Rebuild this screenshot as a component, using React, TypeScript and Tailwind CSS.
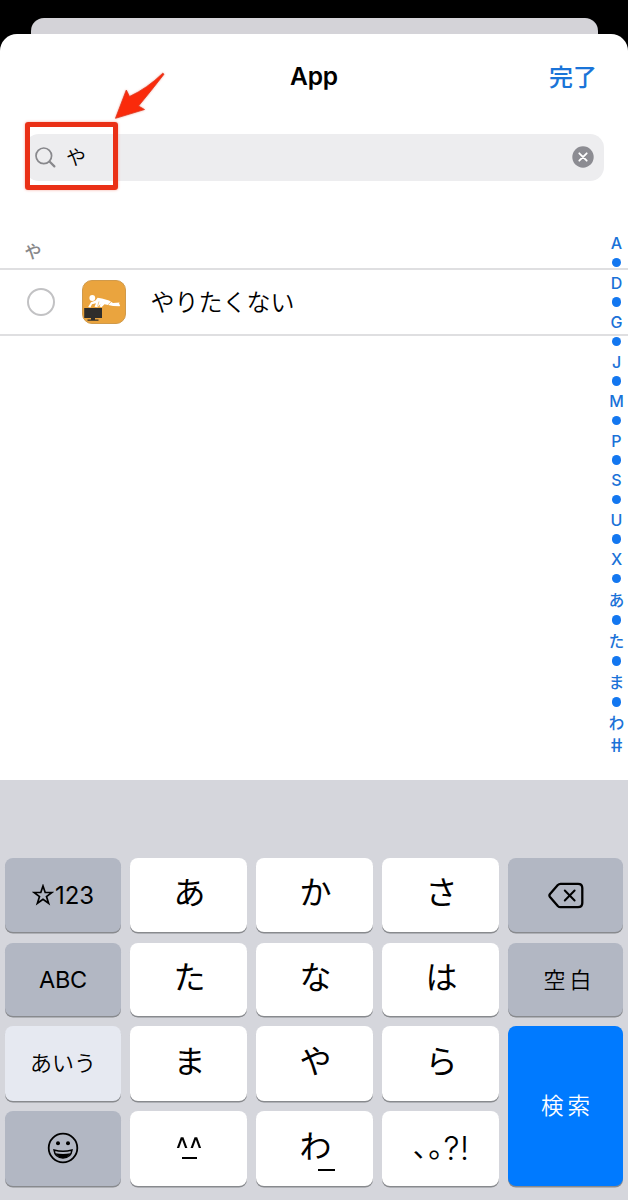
import type { ReactNode } from "react";

const JP = "font-['Inter','Noto_Sans_CJK_JP',sans-serif]";

const latinIndex = ["A", "D", "G", "J", "M", "P", "S", "U", "X"];
const kanaIndex = ["あ", "た", "ま", "わ"];

function Dot({ className }: { className: string }) {
  return (
    <span className={`flex items-center justify-center ${className}`}>
      <span className="size-[9.5px] rounded-full bg-[#1377f0]" />
    </span>
  );
}

function SectionIndex() {
  return (
    <nav className="absolute top-[233px] right-0 flex w-[23px] flex-col text-center text-[16px] font-medium text-[#1a72d8]">
      {latinIndex.map((c) => (
        <div key={c}>
          <span className="block h-[19.5px] leading-[20px]">{c}</span>
          <Dot className="h-[20px]" />
        </div>
      ))}
      {kanaIndex.map((c, i) => (
        <div key={c}>
          <span className="block h-[21.5px] text-[15.5px] leading-[23px]">{c}</span>
          {i < kanaIndex.length - 1 && <Dot className="h-[19.5px]" />}
        </div>
      ))}
      <span className="block h-[22px] skew-x-[8deg] text-[19px] leading-[25px]">#</span>
    </nav>
  );
}

function AppIcon() {
  return (
    <svg className="size-[44px] shrink-0" viewBox="0 0 44 44">
      <rect x="0.5" y="0.5" width="43" height="43" rx="9.5" fill="#eaa43e" stroke="#d09a4b" />
      <g fill="#fff">
        <circle cx="10.3" cy="18" r="2.9" />
        <path d="M6.200 27 L9 22.200 L13.500 20.600 L15.600 17.800 L20 18.600 L27 20.400 L31 23 L37.600 22.400 L37 23.900 L38.200 25 L37.600 26.200 L31 26 L22.500 24.300 L19.500 27.200 L17.500 26.600 L18.500 24 L15.500 27.200 L12.500 26.800 L14 23.300 L10 24.300 L8.400 27.500 Z" />
      </g>
      <path d="M15.500 26.500 L17 21.500 M26 24.800 L29 22" stroke="#eaa43e" strokeWidth="0.600" />
      <path d="M2.200 28 H20 V38 H13 V39.600 H16.500 V40.800 H5.500 V39.600 H9 V38 H2.200 Z" fill="#2e2d2b" />
    </svg>
  );
}

function Key({ tone = "light", className = "", children }: { tone?: "light" | "dark" | "pale" | "blue"; className?: string; children: ReactNode }) {
  const tones = {
    light: "bg-white text-black text-[32px] pl-[2px] pb-[4px]",
    dark: "bg-[#b2b7c3] text-black text-[24px]",
    pale: "bg-[#e6e9f1] text-black text-[22px]",
    blue: "bg-[#007aff] text-white text-[23px]",
  };
  return (
    <button
      className={`relative flex items-center justify-center rounded-[8px] leading-none shadow-[0_1.5px_0_#888a8e] ${tones[tone]} ${className}`}
    >
      {children}
    </button>
  );
}

function Keyboard() {
  return (
    <section className="h-[420px] bg-[#d5d6dc] px-[5px] pt-[78px]">
      <div className="grid grid-cols-[116px_117px_117px_117px_115px] grid-rows-[75px_73px_75px_75px] gap-x-[9px] gap-y-[10px] font-normal">
        <Key tone="dark" className="h-[74px]">
          <svg className="mr-px size-[22px]" viewBox="0 0 22 22" fill="none" stroke="#000" strokeWidth="1.7" strokeLinejoin="miter">
            <path d="M11 2 L13.200 8.500 H20 L14.500 12.600 L16.600 19.300 L11 15.200 L5.400 19.300 L7.500 12.600 L2 8.500 H8.800 Z" />
          </svg>
          <span className="pt-0.5">123</span>
        </Key>
        <Key className="h-[74px]">あ</Key>
        <Key className="h-[74px]">か</Key>
        <Key className="h-[74px]">さ</Key>
        <Key tone="dark" className="h-[74px]">
          <svg className="h-[27px] w-[36px]" viewBox="0 0 36 27" fill="none" stroke="#000" strokeWidth="2.300" strokeLinejoin="round" strokeLinecap="round">
            <path d="M12.500 1.800 H30 Q34.300 1.800 34.300 6 V21 Q34.300 25.200 30 25.200 H12.500 Q11 25.200 9.800 24 L2 15 Q0.800 13.500 2 12 L9.800 3 Q11 1.800 12.500 1.800 Z" />
            <path d="M16.800 8.500 L26.600 18.500 M26.600 8.500 L16.800 18.500" strokeWidth="2" />
          </svg>
        </Key>

        <Key tone="dark"><span className="text-[23.500px] tracking-[-0.3px]">ABC</span></Key>
        <Key>た</Key>
        <Key>な</Key>
        <Key>は</Key>
        <Key tone="dark"><span className="pl-2 text-[22px] font-[350] tracking-[4px]">空白</span></Key>

        <Key tone="pale"><span className="pb-0.5 font-[350]">あいう</span></Key>
        <Key>ま</Key>
        <Key>や</Key>
        <Key>ら</Key>
        <Key tone="blue" className="row-span-2">
          <span className="pl-1 text-[22.500px] font-[350] tracking-[4px]">検索</span>
        </Key>

        <Key tone="dark" className="pb-[2px]">
          <svg className="size-[32px]" viewBox="0 0 32 32" fill="none" stroke="#000" strokeWidth="1.800">
            <circle cx="16" cy="16" r="14.300" />
            <circle cx="11" cy="11.300" r="2" fill="#000" stroke="none" />
            <circle cx="21" cy="11.300" r="2" fill="#000" stroke="none" />
            <path d="M7 18 Q16 20.500 25 18 Q24 26 16 26 Q8 26 7 18 Z" strokeWidth="1.500" />
            <path d="M8.500 21.200 Q16 22.800 23.500 21.200 Q21.500 26 16 26 Q10.500 26 8.500 21.200 Z" fill="#000" stroke="none" />
          </svg>
        </Key>
        <Key>
          <span className="flex flex-col items-center">
            <span className="h-[22px] scale-y-[1.3] text-[27px] leading-[28px] tracking-[1px]">^^</span>
            <span className="h-[2px] w-[15px] bg-black" />
          </span>
        </Key>
        <Key>
          わ
          <span className="absolute top-[58px] left-[62px] h-[1.500px] w-[17px] bg-black" />
        </Key>
        <Key>
          <span className="flex items-baseline pt-[4px] pr-[1px]">
            <span className="w-[16px] -translate-y-[3px] text-[28px]">､</span>
            <span className="w-[15px] -translate-y-[3px] text-[30px]">｡</span>
            <span className="text-[32px] font-[350] tracking-[0.5px]">?!</span>
          </span>
        </Key>
      </div>
    </section>
  );
}

export default function App() {
  return (
    <main className={`relative h-[1200px] w-[628px] overflow-hidden bg-black pt-[18px] ${JP}`} lang="ja">
      <div className="ml-[30.5px] h-[15.5px] w-[567px] rounded-t-[13px] bg-[#d4d3d8]" />
      <div className="h-[746.5px] rounded-t-[17px] bg-white">
        <header className="grid h-[100px] grid-cols-3 items-start px-[31px] pt-[27px]">
          <h1 className="col-start-2 text-center text-[24.500px] leading-[30px] font-semibold tracking-[-0.2px] text-black">App</h1>
          <button className="text-right text-[24px] leading-[33px] font-medium text-[#1a74d8]">完了</button>
        </header>
        <div className="ml-[25px] flex h-[47px] w-[578.500px] items-center rounded-[14px] bg-[#ededef] pr-[9.500px] pl-[10px]">
          <svg className="size-[21px]" viewBox="0 0 21 21" fill="none" stroke="#88888c" strokeLinecap="round">
            <circle cx="8.800" cy="8.800" r="7.800" strokeWidth="1.700" />
            <path d="M14.500 14.500 L19.400 19.400" strokeWidth="2.200" />
          </svg>
          <span className="ml-[10px] pt-0.5 text-[20px] leading-[24px] font-[350] text-black">や</span>
          <svg className="ml-auto size-[22px]" viewBox="0 0 22 22">
            <circle cx="11" cy="11" r="10.700" fill="#8c8c92" />
            <path d="M7.300 7.300 L14.700 14.700 M14.700 7.300 L7.300 14.700" stroke="#fff" strokeWidth="1.800" strokeLinecap="round" />
          </svg>
        </div>
        <h2 className="flex h-[89.500px] items-end border-b-2 border-[#dfdfe1] pb-[4px] pl-[24.500px] text-[17px] leading-[24px] font-medium text-[#88888a]">や</h2>
        <div className="flex h-[66px] items-center border-b-2 border-[#dfdfe1] pl-[27px]">
          <span className="size-[28px] shrink-0 rounded-full border-2 border-[#c2c2c4]" />
          <span className="ml-[27px]"><AppIcon /></span>
          <span className="ml-[24.500px] pt-0.5 text-[24px] leading-[32px] font-[350] text-black">やりたくない</span>
        </div>
      </div>
      <Keyboard />
      <SectionIndex />
      <div className="absolute top-[122px] left-[24.500px] h-[68px] w-[93px] rounded-[3px] border-[5px] border-[#ea3016] shadow-[0_0_3px_#f4a99e]" />
      <svg className="absolute top-[70px] left-[110px] h-[52px] w-[58px] drop-shadow-[0_0_1px_#f4a99e]" viewBox="110 70 58 52">
        <path d="M115.500 118.300 L126.300 90 L129.500 96.500 Q147 88.500 162.800 73.200 L164 74.200 Q151 91 138.500 106 L144.500 109.500 Z" fill="#fa2a0b" stroke="#dd3a22" strokeWidth="0.800" strokeLinejoin="round" />
      </svg>
    </main>
  );
}
